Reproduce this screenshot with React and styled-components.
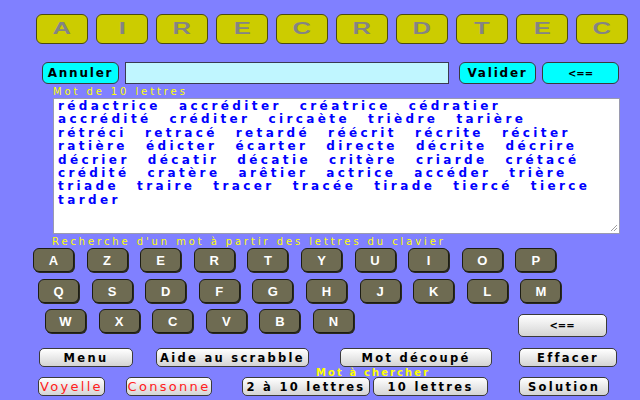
import React from 'react';
import styled, { createGlobalStyle } from 'styled-components';

const GlobalStyle = createGlobalStyle`
    html, body {
        margin: 0;
        padding: 0;
        background-color: #8080ff;
    }
`;

const Page = styled.main`
    width: 640px;
    height: 400px;
    overflow: hidden;
    background-color: #8080ff;
    display: flex;
    flex-direction: column;
    font-family: 'DejaVu Sans', 'Liberation Sans', sans-serif;
`;

const Row = styled.div`
    display: flex;
    align-items: flex-start;
    height: ${(p) => p.$h}px;
    margin-top: ${(p) => p.$mt || 0}px;
    padding-left: ${(p) => p.$indent || 0}px;
    gap: ${(p) => p.$gap || 0}px;
`;

const Tile = styled.div`
    width: 50px;
    height: 28px;
    background-color: #cccc00;
    border: 1px solid #4a4a10;
    border-radius: 6px;
    display: flex;
    justify-content: center;
    align-items: center;
    span {
        display: inline-block;
        transform: scaleX(1.6);
        font-family: 'Liberation Sans', Arial, sans-serif;
        font-weight: 700;
        font-size: 16px;
        color: #848484;
    }
`;

const CyanButton = styled.button`
    width: ${(p) => p.$w}px;
    height: 22px;
    margin-left: ${(p) => p.$ml || 0}px;
    padding: 0;
    background-color: #00ffff;
    border: 1px solid #3a3a3a;
    border-radius: 6px;
    font-family: 'DejaVu Sans', sans-serif;
    font-weight: 700;
    font-size: ${(p) => (p.$arrow ? 10 : 12)}px;
    letter-spacing: ${(p) => (p.$arrow ? 0 : 1.8)}px;
    color: #000;
`;

const WordInput = styled.div`
    width: 322px;
    height: 20px;
    margin-left: 6px;
    background-color: #c0f6ff;
    border: 1px solid #3a3a50;
`;

const Caption = styled.div`
    height: ${(p) => p.$h}px;
    padding-top: ${(p) => p.$pt || 0}px;
    padding-left: ${(p) => p.$indent}px;
    font-size: 10px;
    line-height: ${(p) => p.$h}px;
    letter-spacing: ${(p) => (p.$bold ? 2.1 : 2.9)}px;
    font-weight: ${(p) => (p.$bold ? 700 : 400)};
    color: #ffff00;
    white-space: nowrap;
`;

const WordBox = styled.div`
    position: relative;
    margin-left: 53px;
    padding: 1px 0 0 4px;
    box-sizing: border-box;
    width: 567px;
    height: 136px;
    background-color: #ffffff;
    border: 1px solid #9a9ab0;
`;

const WordLine = styled.div`
    display: flex;
    gap: 18px;
    height: 13.4px;
    line-height: 13.4px;
    font-weight: 700;
    font-size: 12px;
    letter-spacing: 3.4px;
    color: #0000ff;
    white-space: nowrap;
`;

const Grip = styled.svg`
    position: absolute;
    right: 1px;
    bottom: 1px;
`;

const Key = styled.div`
    width: 39px;
    height: 22px;
    background-color: #6e6b52;
    border: 1px solid #1c1c14;
    border-radius: 6px;
    box-shadow: 1px 1px 0 #2a2a20;
    display: flex;
    justify-content: center;
    align-items: center;
    font-family: 'Liberation Sans', Arial, sans-serif;
    font-weight: 700;
    font-size: 13px;
    color: #ffffff;
`;

const GrayButton = styled.button`
    width: ${(p) => p.$w}px;
    height: ${(p) => p.$h || 19}px;
    margin-left: ${(p) => p.$ml || 0}px;
    margin-top: ${(p) => p.$mt || 0}px;
    padding: 0;
    background: linear-gradient(#ffffff, #d4d4d4);
    border: 1px solid #3a3a3a;
    border-radius: 5px;
    font-family: 'DejaVu Sans', sans-serif;
    font-weight: ${(p) => (p.$red ? 400 : 700)};
    font-size: ${(p) => (p.$red ? 13 : p.$arrow ? 10 : 11.5)}px;
    letter-spacing: ${(p) => (p.$arrow ? 0 : 2.3)}px;
    color: ${(p) => (p.$red ? '#ff2020' : '#000')};
    white-space: nowrap;
`;

const topLetters = ['A', 'I', 'R', 'E', 'C', 'R', 'D', 'T', 'E', 'C'];

const wordLines = [
    ['rédactrice', 'accréditer', 'créatrice', 'cédratier'],
    ['accrédité', 'créditer', 'circaète', 'trièdre', 'tarière'],
    ['rétréci', 'retracé', 'retardé', 'réécrit', 'récrite', 'réciter'],
    ['ratière', 'édicter', 'écarter', 'directe', 'décrite', 'décrire'],
    ['décrier', 'décatir', 'décatie', 'critère', 'criarde', 'crétacé'],
    ['crédité', 'cratère', 'arêtier', 'actrice', 'accéder', 'trière'],
    ['triade', 'traire', 'tracer', 'tracée', 'tirade', 'tiercé', 'tierce'],
    ['tarder'],
];

const keyRows = [
    { indent: 33, keys: ['A', 'Z', 'E', 'R', 'T', 'Y', 'U', 'I', 'O', 'P'] },
    { indent: 38, keys: ['Q', 'S', 'D', 'F', 'G', 'H', 'J', 'K', 'L', 'M'] },
    { indent: 45, keys: ['W', 'X', 'C', 'V', 'B', 'N'] },
];

const App = () => {
    return (
        <>
            <GlobalStyle />
            <Page>
                <Row $h={30} $mt={14} $indent={36} $gap={8}>
                    {topLetters.map((l, i) => (
                        <Tile key={i}>
                            <span>{l}</span>
                        </Tile>
                    ))}
                </Row>

                <Row $h={22} $mt={18} $indent={42}>
                    <CyanButton $w={77}>Annuler</CyanButton>
                    <WordInput />
                    <CyanButton $w={77} $ml={10}>Valider</CyanButton>
                    <CyanButton $w={77} $ml={6} $arrow>&lt;==</CyanButton>
                </Row>

                <Caption $h={12} $pt={2} $indent={53}>Mot de 10 lettres</Caption>

                <WordBox>
                    {wordLines.map((line, i) => (
                        <WordLine key={i}>
                            {line.map((w) => (
                                <span key={w}>{w}</span>
                            ))}
                        </WordLine>
                    ))}
                    <Grip width='10' height='10' viewBox='0 0 10 10'>
                        <path d='M9 3 L3 9 M9 6 L6 9' stroke='#a0a0a0' strokeWidth='1' />
                    </Grip>
                </WordBox>

                <Caption $h={12} $pt={2} $indent={52}>
                    Recherche d'un mot à partir des lettres du clavier
                </Caption>

                {keyRows.map((row, i) => (
                    <Row key={i} $h={24} $mt={i === 0 ? 0 : i === 1 ? 7 : 6} $indent={row.indent} $gap={12.6}>
                        {row.keys.map((k) => (
                            <Key key={k}>{k}</Key>
                        ))}
                        {i === 2 && (
                            <GrayButton $w={89} $h={23} $ml={151} $mt={5} $arrow>
                                &lt;==
                            </GrayButton>
                        )}
                    </Row>
                ))}

                <Row $h={19} $mt={15} $indent={39}>
                    <GrayButton $w={94}>Menu</GrayButton>
                    <GrayButton $w={153} $ml={23}>Aide au scrabble</GrayButton>
                    <GrayButton $w={152} $ml={31}>Mot découpé</GrayButton>
                    <GrayButton $w={98} $ml={27}>Effacer</GrayButton>
                </Row>

                <Caption $h={8} $pt={2} $indent={316} $bold>Mot à chercher</Caption>

                <Row $h={19} $indent={38}>
                    <GrayButton $w={67} $red>Voyelle</GrayButton>
                    <GrayButton $w={86} $ml={21} $red>Consonne</GrayButton>
                    <GrayButton $w={128} $ml={30}>2 à 10 lettres</GrayButton>
                    <GrayButton $w={115} $ml={3}>10 lettres</GrayButton>
                    <GrayButton $w={90} $ml={31}>Solution</GrayButton>
                </Row>
            </Page>
        </>
    );
};

export default App;
